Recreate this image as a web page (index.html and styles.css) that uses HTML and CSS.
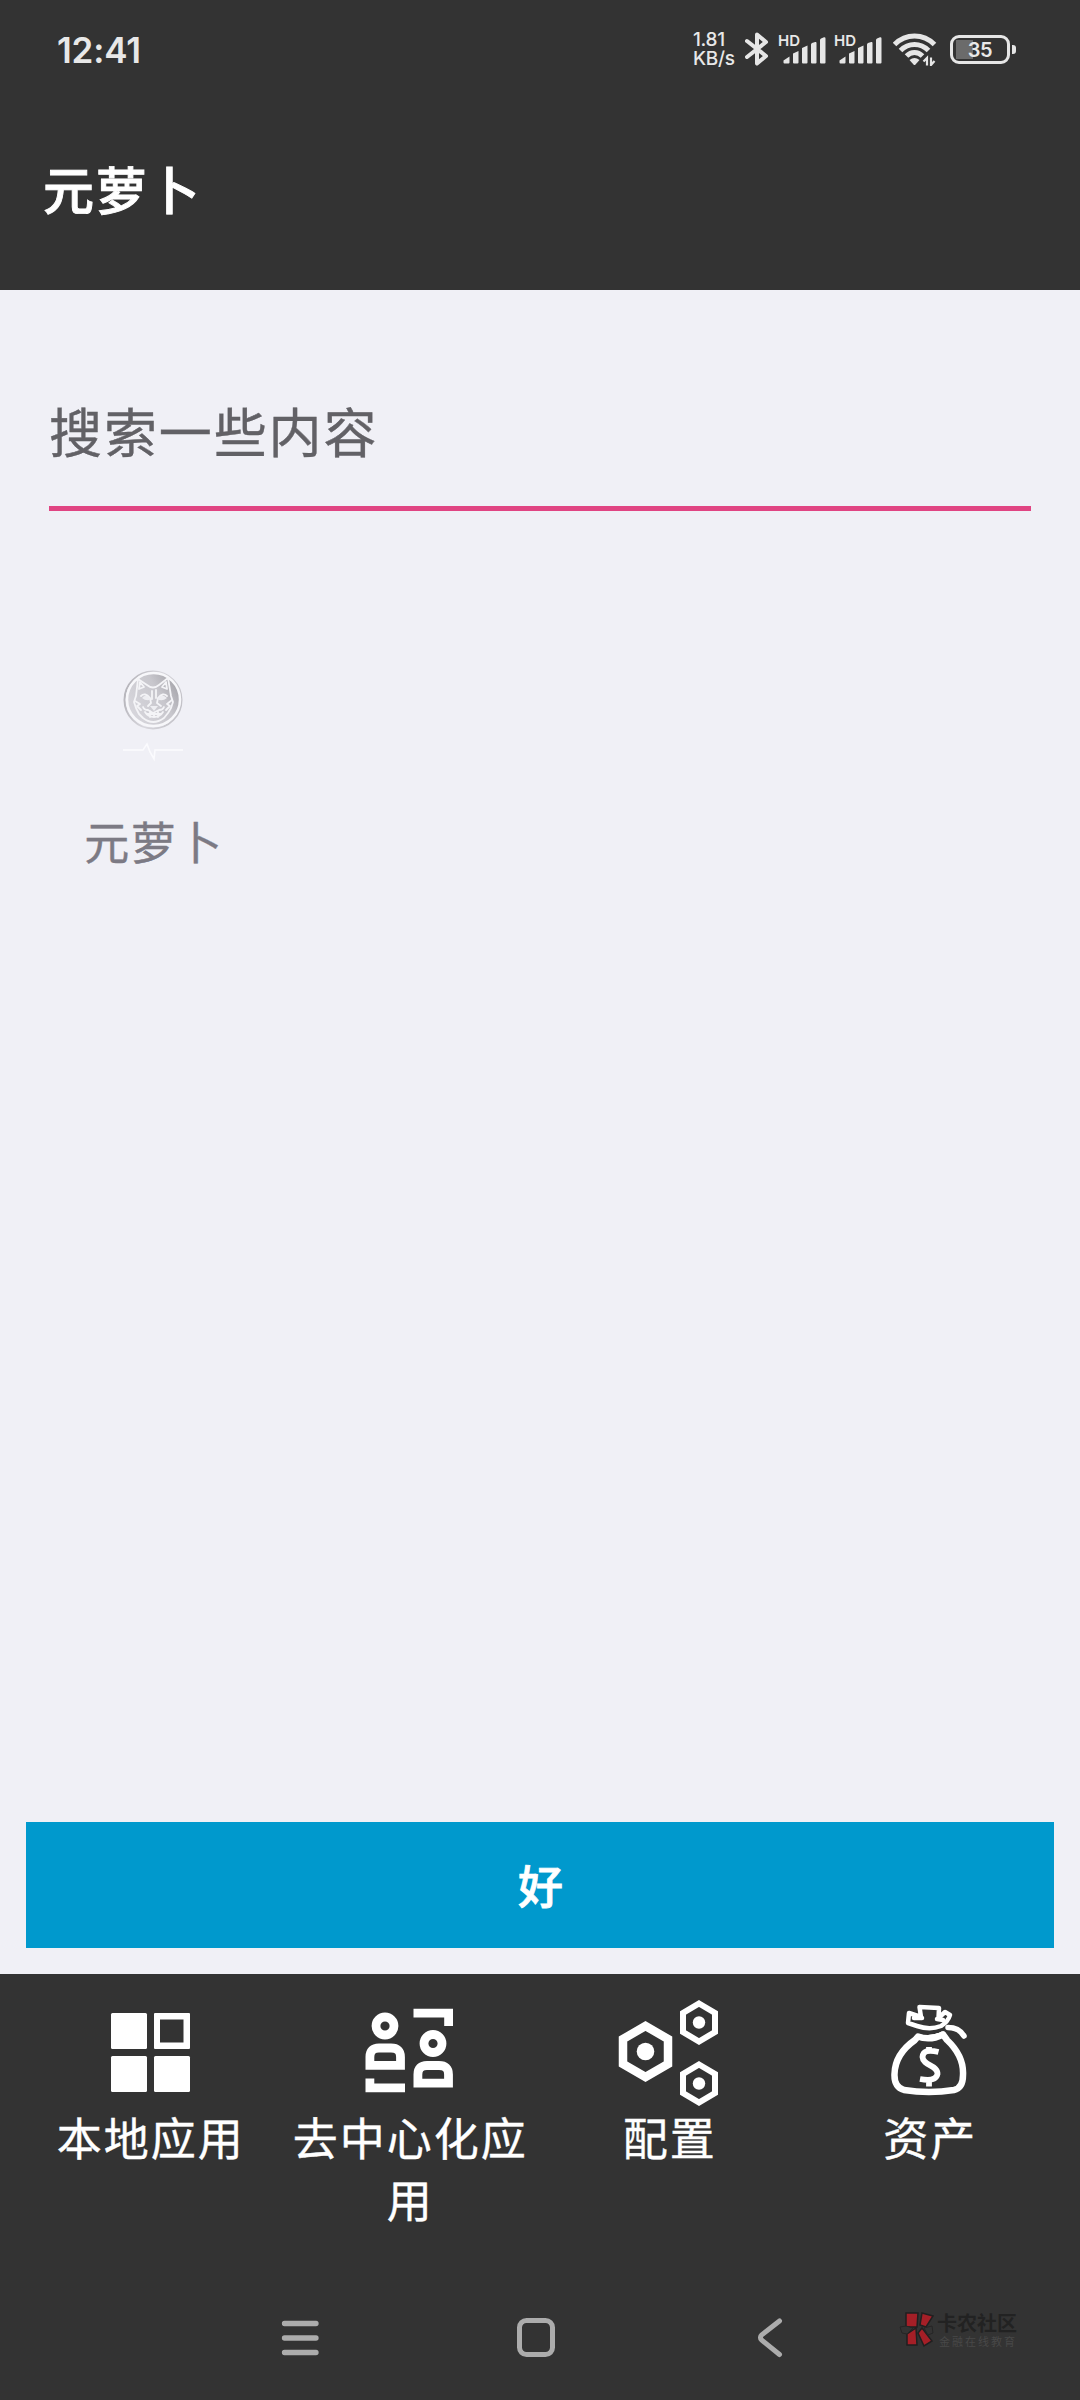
FILE: index.html
```html
<!DOCTYPE html>
<html lang="zh-CN">
<head>
<meta charset="utf-8">
<title>元萝卜</title>
<link rel="stylesheet" href="styles.css">
</head>
<body>
<div class="screen">
  <header class="header">
    <div class="status">
      <span class="clock">12:41</span>
      <div class="status-icons">
        <div class="speed"><span>1.81</span><span>KB/s</span></div>
        <svg class="bluetooth" width="24" height="38" viewBox="0 0 24 38"><path d="M2 11 21 26 12 33.5V4.500L21 12 2 27" fill="none" stroke="#e6e6e6" stroke-width="4" stroke-linecap="round" stroke-linejoin="round"/></svg>
        <div class="signal">
          <span class="hd">HD</span>
          <svg width="48" height="30" viewBox="0 0 48 30" fill="#e6e6e6"><path d="M5.500 27.500V25.500L11.500 21.500V27.500Q11.500 28.500 10.500 28.500H6.500Q5.500 28.500 5.500 27.500ZM15 18.500 20.500 16V27.500Q20.500 28.500 19.500 28.500H16Q15 28.500 15 27.500ZM24 13 29.500 10.500V27.500Q29.500 28.500 28.500 28.500H25Q24 28.500 24 27.500ZM33 9.500Q33 8.500 34 8L37.200 7Q38.500 6.500 38.500 8V27.500Q38.500 28.500 37.500 28.500H34Q33 28.500 33 27.500ZM42 5Q42 4 43 3.500L46 2.300Q47.500 2 47.500 3.500V27.500Q47.500 28.500 46.500 28.500H43Q42 28.500 42 27.500Z"/></svg>
        </div>
        <div class="signal">
          <span class="hd">HD</span>
          <svg width="48" height="30" viewBox="0 0 48 30" fill="#e6e6e6"><path d="M5.500 27.500V25.500L11.500 21.500V27.500Q11.500 28.500 10.500 28.500H6.500Q5.500 28.500 5.500 27.500ZM15 18.500 20.500 16V27.500Q20.500 28.500 19.500 28.500H16Q15 28.500 15 27.500ZM24 13 29.500 10.500V27.500Q29.500 28.500 28.500 28.500H25Q24 28.500 24 27.500ZM33 9.500Q33 8.500 34 8L37.200 7Q38.500 6.500 38.500 8V27.500Q38.500 28.500 37.500 28.500H34Q33 28.500 33 27.500ZM42 5Q42 4 43 3.500L46 2.300Q47.500 2 47.500 3.500V27.500Q47.500 28.500 46.500 28.500H43Q42 28.500 42 27.500Z"/></svg>
        </div>
        <svg class="wifi" width="44" height="34" viewBox="0 0 44 34"><g fill="none" stroke="#e6e6e6" stroke-width="5"><path d="M1.500 12.500Q10 4 21.500 4T41.500 12.500"/><path d="M7.500 18.500Q13.500 12.500 21.500 12.500T35.500 18.500"/><path d="M13.500 24Q17 20.500 21.500 20.500T29.500 24"/></g><path d="M16.500 28Q21.500 23.800 26.500 28L22.500 32.500Q21.500 33.500 20.500 32.500Z" fill="#e6e6e6"/><path d="M34 34V26.500L30.500 30M38 26V33.500L41.500 29.500" fill="none" stroke="#e6e6e6" stroke-width="2.200" transform="translate(0 -0.500)"/></svg>
        <div class="battery"><span>35</span></div><i class="nub"></i>
      </div>
    </div>
    <h1 class="title">元萝卜</h1>
  </header>

  <main class="main">
    <div class="search">搜索一些内容</div>
    <div class="app">
      <svg class="app-icon" width="66" height="96" viewBox="0 0 66 96">
        <defs>
          <linearGradient id="coin" x1="0.1" y1="0.7" x2="0.95" y2="0.2"><stop offset="0" stop-color="#d6d5db"/><stop offset="0.6" stop-color="#c8c7cd"/><stop offset="1" stop-color="#a6a5ab"/></linearGradient>
          <linearGradient id="rim" x1="0" y1="0.3" x2="1" y2="0.6"><stop offset="0" stop-color="#b5b4ba"/><stop offset="0.5" stop-color="#d8d7dd"/><stop offset="1" stop-color="#c3c2c8"/></linearGradient>
        </defs>
        <circle cx="33" cy="32" r="28.500" fill="none" stroke="url(#rim)" stroke-width="2"/>
        <circle cx="33.500" cy="31.500" r="26.500" fill="url(#coin)" stroke="#f7f7fa" stroke-width="2.500"/>
        <g fill="none" stroke="#f4f4f7" stroke-width="1.800" stroke-linejoin="round" stroke-linecap="round">
          <path d="M16 28 18 11 27 17Q33 22 39 17L48 10 51 28 53 34 51 40 48 45 44 50Q33 58 23 50L19 46 16 40 14 34Z"/>
          <path d="M19 21 20 14 24 19ZM47 21 46 14 42 19ZM15 33 20 36 17 38 21 42M52 32 47 36 50 38 46 42M32 23V31M36 22V30M21 28Q25 24 30 30L31 35 28 38M47 28Q43 24 38 30L37 35 41 38M23 39Q24 42 28 42L33 45 39 42Q43 42 44 39M25 44Q28 49 34 49T43 44M27 46H41M30 43V49M34 45V49M38 43V49"/>
        </g>
        <path d="M22 30Q26 25 31 31Q27 34 22 30ZM37 31Q42 25 47 30Q42 34 37 31ZM30 38H38L34 43Z" fill="#eeeef2"/>
        <path d="M3 82H23L27 76 30 84 34 91 35 82H63" fill="none" stroke="#fbfbfe" stroke-width="1.600"/>
      </svg>
      <span class="app-name">元萝卜</span>
    </div>
    <button class="confirm" type="button">好</button>
  </main>

  <nav class="tabs">
    <a class="tab">
      <svg width="110" height="110" viewBox="0 0 110 110" fill="#fff"><rect x="16" y="17" width="36" height="36" rx="1.500"/><rect x="16" y="60" width="36" height="36" rx="1.500"/><rect x="59" y="60" width="36" height="36" rx="1.500"/><path fill-rule="evenodd" d="M60 17H94Q95 17 95 18V52Q95 53 94 53H60Q59 53 59 52V18Q59 17 60 17ZM65 23.500V46.500H88.500V23.500Z"/></svg>
      <span>本地应用</span>
    </a>
    <a class="tab">
      <svg width="110" height="110" viewBox="0 0 110 110" fill="#fff"><g fill="none" stroke="#fff" stroke-width="8.800"><circle cx="31" cy="30" r="9"/><circle cx="79" cy="47.500" r="9"/><path d="M15.900 69.400V61Q15.900 52 25 52H37Q46.500 52 46.500 61V69.400ZM63.900 87.100V78.500Q63.900 69.500 73 69.500H85Q94.500 69.500 94.500 78.500V87.100Z"/><path d="M15.900 82.500V96M11.500 91.800H51M59.500 17.200H99M94.600 13V30"/></g></svg>
      <span>去中心化应用</span>
    </a>
    <a class="tab">
      <svg width="110" height="110" viewBox="0 0 110 110"><g fill="none" stroke="#fff"><path stroke-width="8.500" d="M31.500 30 54 43V68L31.500 81 9 68V43Z"/><path stroke-width="6" d="M85 7.500 101 17V36L85 45.500 69 36V17ZM85 68.500 101 78V97L85 106.500 69 97V78Z"/></g><g fill="#fff"><circle cx="31.500" cy="55.500" r="8.800"/><circle cx="85" cy="26.500" r="6.200"/><circle cx="85" cy="87.500" r="6.200"/></g></svg>
      <span>配置</span>
    </a>
    <a class="tab tab-assets">
      <svg width="110" height="110" viewBox="0 0 110 110" fill="none" stroke="#fff" stroke-linecap="round" stroke-linejoin="round"><path stroke-width="6.500" d="M43 40.500Q55 45 68 38.500L72 44Q89 60 88 79Q88 92 79 94Q54 98 29 94Q19 91 19.500 78Q20 58 40 44Z"/><path stroke-width="4.500" d="M42 30 33 27 34 17 46 21 44.500 11 64 12 63.500 22 70 16 75 19Q73 26 66 30Q55 34.500 42 30ZM47 22 39 22M62 23 68 24"/><path stroke-width="5.500" d="M73 31.500Q84 31.500 89 40M44 41Q55 44 68 38"/><path stroke-width="5.800" d="M63.500 56Q48 52 47.500 61C48 70 63 69 62.500 78Q61 86 45 83M54 51V57M54 83V90.500" stroke-linecap="butt"/></svg>
      <span>资产</span>
    </a>
  </nav>

  <div class="system-nav">
    <svg width="38" height="40" viewBox="0 0 38 40"><path d="M3.500 5.500H35M3.500 20H35M3.500 34.500H35" fill="none" stroke="#acacac" stroke-width="5.300" stroke-linecap="round"/></svg>
    <svg width="40" height="42" viewBox="0 0 40 42"><rect x="2.500" y="3.500" width="33" height="34" rx="7" fill="none" stroke="#acacac" stroke-width="5"/></svg>
    <svg width="28" height="42" viewBox="0 0 28 42"><path d="M24.500 4 6.800 17.800Q4 20.500 6.800 23.200L24.500 37.500" fill="none" stroke="#acacac" stroke-width="5" stroke-linecap="round"/></svg>
  </div>

  <div class="watermark">
    <svg width="36" height="38" viewBox="0 0 36 38"><g fill="#a51f27" stroke="#211f20" stroke-width="1.500"><path d="M7 2H19L18 16H7ZM23 2 34 5 27 16 21 14ZM8 23 17 17 18 34H8ZM19 22 23 17 33 30 25 35Z"/></g><path d="M1 16 7 15 14 17 8 23 3 22ZM25 17 33 15 34 22 29 24Z" fill="#333" stroke="#252525"/></svg>
    <div class="watermark-text"><b>卡农社区</b><span>金融在线教育</span></div>
  </div>
</div>
</body>
</html>
```
FILE: styles.css
```css
* { box-sizing: border-box; }
body { margin: 0; }
svg { display: block; flex: none; }

.screen {
  position: relative;
  display: flex;
  flex-direction: column;
  width: 1080px;
  height: 2400px;
  background: #f0f0f6;
  font-family: "Noto Sans CJK SC", sans-serif;
  overflow: hidden;
}

.header { height: 290px; background: #333; color: #fff; }
.status {
  display: flex;
  justify-content: space-between;
  height: 100px;
  padding: 0 64px 0 57px;
  color: #e8e8e8;
  font-family: Inter, sans-serif;
}
.clock { font-size: 35px; line-height: 101px; font-weight: 600; letter-spacing: -0.200px; }
.status-icons { display: flex; align-items: flex-start; }
.speed {
  display: flex;
  flex-direction: column;
  width: 51px;
  padding-top: 31px;
  font-size: 19px;
  line-height: 18.500px;
  font-weight: 500;
  letter-spacing: -0.300px;
}
.bluetooth { margin: 30px -1px 0 1px; }
.signal { position: relative; width: 46px; margin: 35px 0 0 10px; }
.signal + .signal { margin-left: 10px; }
.hd {
  position: absolute;
  top: -1px;
  left: 0;
  font-size: 15px;
  line-height: 14px;
  font-weight: 600;
}
.wifi { margin: 32px -1px 0 13px; }
.battery {
  width: 60px;
  height: 29px;
  margin: 35px 0 0 14px;
  border: 3px solid #e6e6e6;
  border-radius: 9px;
  background: linear-gradient(#6b6b6b, #6b6b6b) 3px 2px / 17px 19px no-repeat;
  font-size: 20px;
  line-height: 25px;
  font-weight: 600;
  letter-spacing: -0.500px;
  text-align: center;
}
.nub { width: 4px; height: 9px; margin: 45px 0 0 2px; border-radius: 0 3px 3px 0; background: #e6e6e6; }
.title {
  margin: 0;
  padding: 50px 43px 0;
  font-size: 51px;
  line-height: 76px;
  font-weight: 500;
  letter-spacing: 1.800px;
  -webkit-text-stroke: 0.900px currentColor;
}

.main { display: flex; flex-direction: column; height: 1684px; padding: 86px 26px 26px; }
.search {
  height: 135px;
  margin: 0 23px;
  padding: 16px 0 0;
  border-bottom: 5px solid #e04482;
  color: #626166;
  font-size: 53px;
  line-height: 76px;
  letter-spacing: 1.900px;
  -webkit-text-stroke: 0.400px currentColor;
}
.app {
  display: flex;
  flex-direction: column;
  align-items: center;
  width: 210px;
  margin: 157px 0 0 22px;
  color: #7c7a84;
}
.app-name {
  margin: 45px 0 0 2px;
  font-size: 45px;
  line-height: 64px;
  letter-spacing: 1.500px;
  -webkit-text-stroke: 0.400px currentColor;
}
.confirm {
  height: 126px;
  margin-top: auto;
  padding: 0 0 0 1px;
  border: 0;
  background: #0099cd;
  color: #fff;
  font: 500 45px/126px "Noto Sans CJK SC", sans-serif;
  -webkit-text-stroke: 0.800px currentColor;
}

.tabs {
  display: grid;
  grid-template-columns: repeat(4, 1fr);
  height: 306px;
  padding: 22px 21px 0;
  background: #333;
  color: #fff;
}
.tab { display: flex; flex-direction: column; align-items: center; text-align: center; }
.tab svg { margin-right: 2px; }
.tab-assets svg { margin: 0 0 0 2px; }
.tab span {
  font-size: 45px;
  line-height: 62px;
  letter-spacing: 2px;
  -webkit-text-stroke: 0.400px currentColor;
}
.tab-assets span { padding-left: 2px; }

.system-nav {
  display: flex;
  align-items: center;
  gap: 198px;
  height: 120px;
  padding: 0 0 4px 281px;
  background: #333;
}

.watermark { position: absolute; left: 899px; top: 2311px; display: flex; gap: 2px; }
.watermark-text { display: flex; flex-direction: column; color: #222; white-space: nowrap; }
.watermark-text b { font-size: 20px; line-height: 24px; font-weight: 700; }
.watermark-text span { padding-left: 2px; font-size: 11px; line-height: 13px; letter-spacing: 2px; color: #484848; }
```
